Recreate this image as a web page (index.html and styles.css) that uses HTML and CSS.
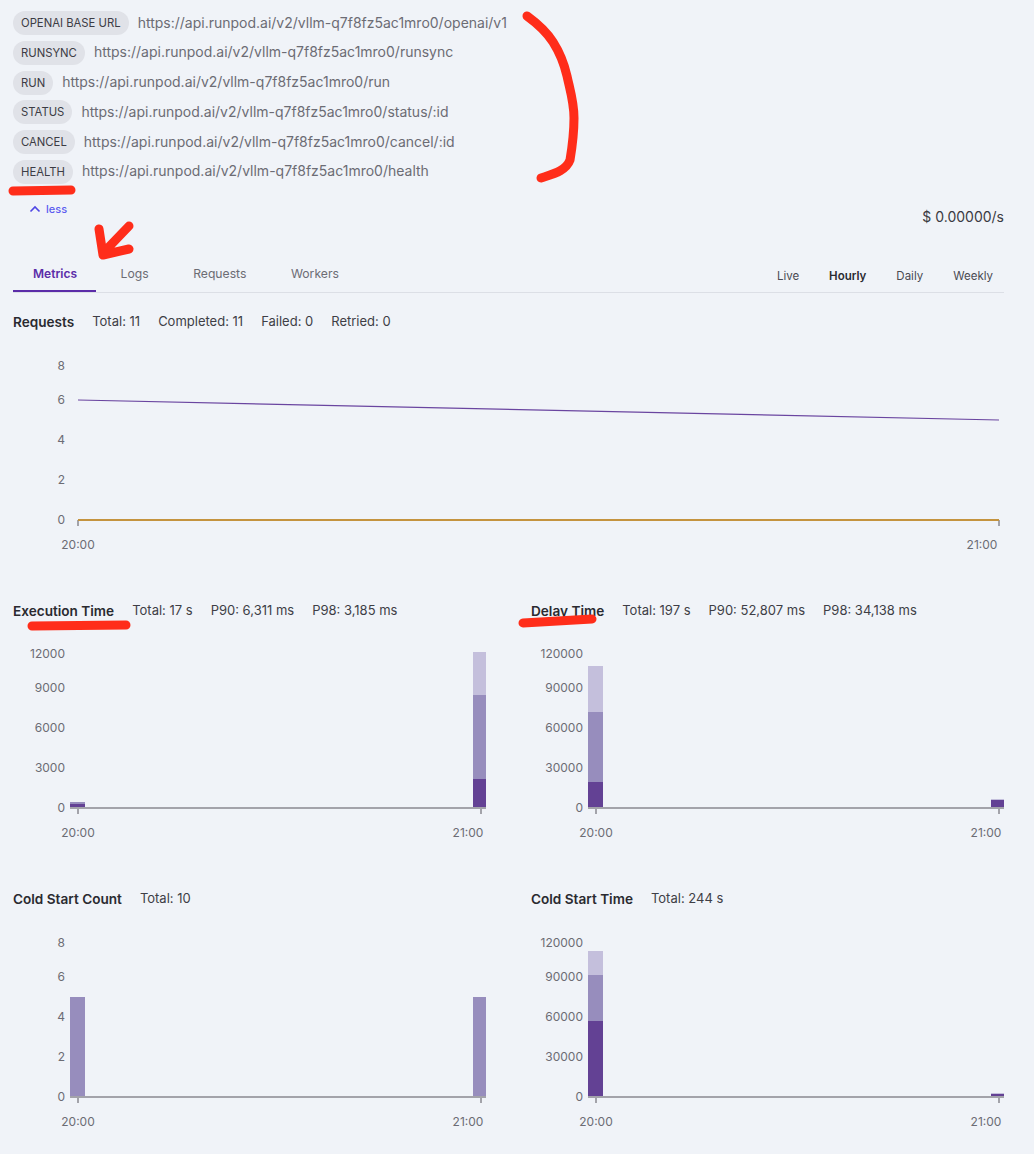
FILE: index.html
```html
<!DOCTYPE html>
<html>
<head>
    <meta charset="UTF-8">
    <title>Endpoint metrics</title>
    <link rel="stylesheet" href="styles.css">
</head>
<body>

<div id="content">
    <div class="endpoints">
        <div class="endpoint"><span class="chip">OPENAI BASE URL</span><span class="url">https://api.runpod.ai/v2/vllm-q7f8fz5ac1mro0/openai/v1</span></div>
        <div class="endpoint"><span class="chip">RUNSYNC</span><span class="url">https://api.runpod.ai/v2/vllm-q7f8fz5ac1mro0/runsync</span></div>
        <div class="endpoint"><span class="chip">RUN</span><span class="url">https://api.runpod.ai/v2/vllm-q7f8fz5ac1mro0/run</span></div>
        <div class="endpoint"><span class="chip">STATUS</span><span class="url">https://api.runpod.ai/v2/vllm-q7f8fz5ac1mro0/status/:id</span></div>
        <div class="endpoint"><span class="chip">CANCEL</span><span class="url">https://api.runpod.ai/v2/vllm-q7f8fz5ac1mro0/cancel/:id</span></div>
        <div class="endpoint"><span class="chip">HEALTH</span><span class="url">https://api.runpod.ai/v2/vllm-q7f8fz5ac1mro0/health</span></div>
    </div>

    <div class="summary">
        <a class="less">
            <svg width="12" height="8" viewBox="0 0 12 8"><path d="M1.5 6.5 L6 2 L10.5 6.5" fill="none" stroke="#4f46e5" stroke-width="1.6"/></svg>
            less
        </a>
        <div class="price">$ 0.00000/s</div>
    </div>

    <div class="tabbar">
        <div class="tabs">
            <span class="tab active">Metrics</span>
            <span class="tab">Logs</span>
            <span class="tab">Requests</span>
            <span class="tab">Workers</span>
        </div>
        <div class="ranges">
            <span class="range">Live</span>
            <span class="range active">Hourly</span>
            <span class="range">Daily</span>
            <span class="range">Weekly</span>
        </div>
    </div>

    <section class="metric wide">
        <div class="metric-head">
            <h3>Requests</h3>
            <span>Total: 11</span><span>Completed: 11</span><span>Failed: 0</span><span>Retried: 0</span>
        </div>
        <svg class="chart" width="991" height="208" viewBox="0 0 991 208">
            <g class="ticks-y">
                <text x="52" y="22">8</text>
                <text x="52" y="56">6</text>
                <text x="52" y="96">4</text>
                <text x="52" y="136">2</text>
                <text x="52" y="176">0</text>
            </g>
            <line class="tick" x1="65" y1="172" x2="65" y2="178"/>
            <line class="tick" x1="986" y1="172" x2="986" y2="178"/>
            <line class="series-purple" x1="65" y1="52" x2="986" y2="72"/>
            <line class="series-orange" x1="65" y1="172" x2="986" y2="172"/>
            <text class="tick-x" x="65" y="201">20:00</text>
            <text class="tick-x" x="969" y="201">21:00</text>
        </svg>
    </section>

    <div class="metric-grid">
        <section class="metric">
            <div class="metric-head">
                <h3>Execution Time</h3>
                <span>Total: 17 s</span><span>P90: 6,311 ms</span><span>P98: 3,185 ms</span>
            </div>
            <svg class="chart" width="473" height="208" viewBox="0 0 473 208">
                <g class="ticks-y">
                    <text x="52" y="21">12000</text>
                    <text x="52" y="55">9000</text>
                    <text x="52" y="95">6000</text>
                    <text x="52" y="135">3000</text>
                    <text x="52" y="175">0</text>
                </g>
                <rect class="bar-mid" x="57" y="165" width="15" height="2"/>
                <rect class="bar-dark" x="57" y="167" width="15" height="4"/>
                <rect class="bar-light" x="460" y="15" width="13" height="43"/>
                <rect class="bar-mid" x="460" y="58" width="13" height="84"/>
                <rect class="bar-dark" x="460" y="142" width="13" height="29"/>
                <line class="axis" x1="57" y1="171" x2="473" y2="171"/>
                <line class="tick" x1="65" y1="171" x2="65" y2="177"/>
                <line class="tick" x1="468" y1="171" x2="468" y2="177"/>
                <text class="tick-x" x="65" y="200">20:00</text>
                <text class="tick-x" x="455" y="200">21:00</text>
            </svg>
        </section>

        <section class="metric">
            <div class="metric-head">
                <h3>Delay Time</h3>
                <span>Total: 197 s</span><span>P90: 52,807 ms</span><span>P98: 34,138 ms</span>
            </div>
            <svg class="chart" width="473" height="208" viewBox="0 0 473 208">
                <g class="ticks-y">
                    <text x="52" y="21">120000</text>
                    <text x="52" y="55">90000</text>
                    <text x="52" y="95">60000</text>
                    <text x="52" y="135">30000</text>
                    <text x="52" y="175">0</text>
                </g>
                <rect class="bar-light" x="57" y="29" width="15" height="46"/>
                <rect class="bar-mid" x="57" y="75" width="15" height="70"/>
                <rect class="bar-dark" x="57" y="145" width="15" height="26"/>
                <rect class="bar-light" x="460" y="162" width="13" height="1"/>
                <rect class="bar-dark" x="460" y="163" width="13" height="8"/>
                <line class="axis" x1="57" y1="171" x2="473" y2="171"/>
                <line class="tick" x1="65" y1="171" x2="65" y2="177"/>
                <line class="tick" x1="468" y1="171" x2="468" y2="177"/>
                <text class="tick-x" x="65" y="200">20:00</text>
                <text class="tick-x" x="455" y="200">21:00</text>
            </svg>
        </section>

        <section class="metric">
            <div class="metric-head">
                <h3>Cold Start Count</h3>
                <span>Total: 10</span>
            </div>
            <svg class="chart" width="473" height="208" viewBox="0 0 473 208">
                <g class="ticks-y">
                    <text x="52" y="22">8</text>
                    <text x="52" y="56">6</text>
                    <text x="52" y="96">4</text>
                    <text x="52" y="136">2</text>
                    <text x="52" y="176">0</text>
                </g>
                <rect class="bar-mid" x="57" y="72" width="15" height="100"/>
                <rect class="bar-mid" x="460" y="72" width="13" height="100"/>
                <line class="axis" x1="57" y1="172" x2="473" y2="172"/>
                <line class="tick" x1="65" y1="172" x2="65" y2="178"/>
                <line class="tick" x1="468" y1="172" x2="468" y2="178"/>
                <text class="tick-x" x="65" y="201">20:00</text>
                <text class="tick-x" x="455" y="201">21:00</text>
            </svg>
        </section>

        <section class="metric">
            <div class="metric-head">
                <h3>Cold Start Time</h3>
                <span>Total: 244 s</span>
            </div>
            <svg class="chart" width="473" height="208" viewBox="0 0 473 208">
                <g class="ticks-y">
                    <text x="52" y="22">120000</text>
                    <text x="52" y="56">90000</text>
                    <text x="52" y="96">60000</text>
                    <text x="52" y="136">30000</text>
                    <text x="52" y="176">0</text>
                </g>
                <rect class="bar-light" x="57" y="26" width="15" height="24"/>
                <rect class="bar-mid" x="57" y="50" width="15" height="46"/>
                <rect class="bar-dark" x="57" y="96" width="15" height="76"/>
                <rect class="bar-light" x="460" y="168" width="13" height="1"/>
                <rect class="bar-dark" x="460" y="169" width="13" height="3"/>
                <line class="axis" x1="57" y1="172" x2="473" y2="172"/>
                <line class="tick" x1="65" y1="172" x2="65" y2="178"/>
                <line class="tick" x1="468" y1="172" x2="468" y2="178"/>
                <text class="tick-x" x="65" y="201">20:00</text>
                <text class="tick-x" x="455" y="201">21:00</text>
            </svg>
        </section>
    </div>
</div>

<!-- red pen marks drawn on top of the page -->
<svg class="scribbles" width="1034" height="1154" viewBox="0 0 1034 1154">
    <path d="M527 16 C538 24 546 31 553 42 C560 53 564 63 567 76 C570 90 574 102 574 118 C574 133 572 148 570 160 C566 171 553 174 541 178"/>
    <path d="M13 191 L71 190"/>
    <path d="M99 229 L103 255 L129 249 M103 253 L129 226"/>
    <path d="M32 626 L126 625"/>
    <path d="M523 623 L592 619"/>
</svg>

</body>
</html>
```

FILE: styles.css
```css
html, body {
    margin: 0;
    background: #f0f3f8;
}

body {
    font-family: Inter, "Liberation Sans", sans-serif;
    color: #3a3a42;
}

#content {
    padding: 11px 30px 0 13px;
}

.endpoints {
    display: flex;
    flex-direction: column;
    gap: 5.8px;
}

.endpoint {
    display: flex;
    align-items: center;
    height: 24px;
}

.chip {
    display: flex;
    align-items: center;
    height: 24px;
    padding: 0 8px;
    border-radius: 12px;
    background: #e0e2e8;
    color: #3c3c44;
    font-size: 11.3px;
}

.url {
    margin: -2px 0 0 9px;
    font-size: 14px;
    color: #6c6c74;
}

.summary {
    display: flex;
    justify-content: space-between;
    height: 60px;
}

.less {
    display: flex;
    align-items: center;
    gap: 5px;
    height: 16px;
    margin: 17px 0 0 16px;
    font-size: 11px;
    font-weight: 500;
    color: #5b5bf0;
}

.price {
    margin-top: 24px;
    font-size: 14px;
    line-height: 17px;
    color: #3a3a42;
}

.tabbar {
    display: flex;
    justify-content: space-between;
    height: 48px;
    border-bottom: 1px solid #dcdfe6;
}

.tabs {
    display: flex;
    gap: 4.5px;
}

.tab {
    height: 47px;
    padding: 0 20px;
    line-height: 60px;
    font-size: 12.2px;
    color: #6c6c74;
}

.tab.active {
    height: 46px;
    padding-right: 19px;
    border-bottom: 2px solid #5b2ca8;
    color: #5b2ca8;
    font-size: 12px;
    font-weight: 600;
}

.ranges {
    display: flex;
    gap: 30px;
    padding-right: 11px;
}

.range {
    line-height: 64px;
    font-size: 11.5px;
    color: #4a4a52;
}

.range.active {
    color: #2a2a30;
    font-weight: 600;
}

.metric.wide {
    margin-top: 19px;
}

.metric-head {
    display: flex;
    align-items: center;
    gap: 18px;
    height: 20px;
    font-size: 13px;
    color: #3e3e46;
}

.metric-head span {
    margin-top: -2px;
}

.metric-head h3 {
    margin: 0;
    font-size: 13.6px;
    font-weight: 600;
    color: #2a2a30;
}

.chart {
    display: block;
    margin-top: 16px;
}

.metric-grid {
    display: grid;
    grid-template-columns: 473px 473px;
    column-gap: 45px;
    row-gap: 44px;
    margin-top: 45px;
}

.ticks-y text {
    font-family: Inter, "Liberation Sans", sans-serif;
    font-size: 12px;
    fill: #6c6c74;
    text-anchor: end;
}

.tick-x {
    font-family: Inter, "Liberation Sans", sans-serif;
    font-size: 12px;
    fill: #6c6c74;
    text-anchor: middle;
}

.tick {
    stroke: #a3a3aa;
    stroke-width: 2;
}

.axis {
    stroke: #a3a3aa;
    stroke-width: 2;
}

.series-purple {
    stroke: #6a45a0;
    stroke-width: 1.2;
}

.series-orange {
    stroke: #c4933f;
    stroke-width: 2;
}

.bar-dark {
    fill: #634194;
}

.bar-mid {
    fill: #978dbd;
}

.bar-light {
    fill: #c4bfdc;
}

.scribbles {
    position: absolute;
    top: 0;
    left: 0;
    pointer-events: none;
}

.scribbles path {
    fill: none;
    stroke: #ff2d1a;
    stroke-width: 9;
    stroke-linecap: round;
    stroke-linejoin: round;
}
```
